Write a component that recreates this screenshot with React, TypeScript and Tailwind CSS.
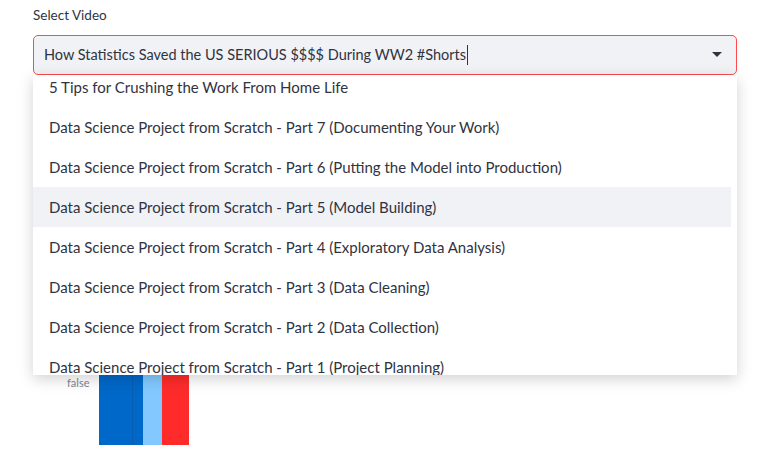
import React from 'react';

const options = [
  '5 Tips for Crushing the Work From Home Life',
  'Data Science Project from Scratch - Part 7 (Documenting Your Work)',
  'Data Science Project from Scratch - Part 6 (Putting the Model into Production)',
  'Data Science Project from Scratch - Part 5 (Model Building)',
  'Data Science Project from Scratch - Part 4 (Exploratory Data Analysis)',
  'Data Science Project from Scratch - Part 3 (Data Cleaning)',
  'Data Science Project from Scratch - Part 2 (Data Collection)',
  'Data Science Project from Scratch - Part 1 (Project Planning)',
];

export default function App() {
  return (
    <div className="min-h-[459px] w-[770px] bg-white text-[#31333f]" style={{ fontFamily: 'Lato, "Open Sans", sans-serif' }}>
      <div className="relative px-[33px] pt-[5px]">
        <div className="h-[20px] text-[13.5px] leading-[20px]">Select Video</div>
        {/* select input */}
        <div className="mt-[10px] flex h-[40px] w-[704px] items-center rounded-[5px] border border-[#ff4b4b] bg-[#f0f2f6] pl-[10px] pr-[14px]">
          <span className="text-[14.5px] leading-[20px]">How Statistics Saved the US SERIOUS $$$$ During WW2 #Shorts</span>
          <span className="ml-[1px] h-[20px] w-px bg-[#31333f]" />
          <svg className="ml-auto" width="10" height="6" viewBox="0 0 10 6">
            <path d="M0 0 L10 0 L5 5 Z" fill="#31333f" />
          </svg>
        </div>

        {/* chart peeking out under the menu */}
        <div className="mt-[5px] flex h-[371px] items-end pl-[34px]">
          <div className="mb-[60px] flex flex-col items-start">
            <span className="mb-[1px] text-[11px] leading-[14px] text-[#808495]">false</span>
          </div>
          <div className="mb-[6px] ml-[10px] flex h-[300px]">
            <div className="w-[33px] bg-[#0068c9]" />
            <div className="w-px bg-[#0b5bb0]" />
            <div className="w-[10px] bg-[#0068c9]" />
            <div className="w-[19px] bg-[#83c9ff]" />
            <div className="w-[27px] bg-[#ff2b2b]" />
          </div>
        </div>

        {/* open menu */}
        <div className="absolute left-[33px] top-[75px] h-[300px] w-[704px] overflow-hidden bg-white shadow-[0_4px_14px_rgba(0,0,0,0.18)]">
          <div className="-mt-[8px] pr-[6px]">
            {options.map((o, i) => (
              <div
                key={o}
                className={`flex h-[40px] items-center pl-[16px] text-[15px] ${i === 3 ? 'bg-[#f0f2f6]' : ''}`}
              >
                {o}
              </div>
            ))}
          </div>
        </div>
      </div>
    </div>
  );
}
